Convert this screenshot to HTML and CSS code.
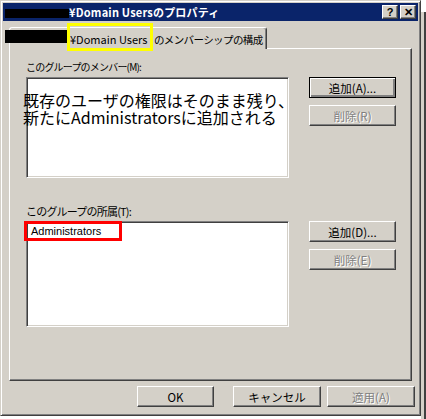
FILE: index.html
```html
<!DOCTYPE html>
<html lang="ja">
<head>
    <meta charset="UTF-8">
    <title>Domain Usersのプロパティ</title>
    <link rel="stylesheet" href="styles.css">
</head>
<body>
    <div class="screen">
        <div class="window">
            <div class="titlebar">
                <span class="title">¥Domain Usersのプロパティ</span>
                <div class="caption-buttons">
                    <span class="cap">?</span>
                    <span class="cap">✕</span>
                </div>
            </div>

            <div class="tabs">
                <div class="tab"><span class="tab-name">¥Domain Users</span> <span class="tab-rest">のメンバーシップの構成</span></div>
            </div>

            <div class="panel">
                <div class="label">このグループのメンバー(M):</div>
                <div class="row">
                    <div class="list list-members">
                        <div class="note">既存のユーザの権限はそのまま残り、<br>新たにAdministratorsに追加される</div>
                    </div>
                    <div class="side-buttons">
                        <span class="btn btn-default">追加(A)...</span>
                        <span class="btn disabled">削除(R)</span>
                    </div>
                </div>

                <div class="label label-second">このグループの所属(T):</div>
                <div class="row">
                    <div class="list list-groups">
                        <div class="item">Administrators</div>
                        <div class="mark-red"></div>
                    </div>
                    <div class="side-buttons">
                        <span class="btn">追加(D)...</span>
                        <span class="btn disabled">削除(E)</span>
                    </div>
                </div>
            </div>

            <div class="footer">
                <span class="btn btn-footer">OK</span>
                <span class="btn btn-footer">キャンセル</span>
                <span class="btn btn-footer disabled">適用(A)</span>
            </div>

            <!-- hidden names / highlight -->
            <div class="redact redact-title"></div>
            <div class="redact redact-tab"></div>
            <div class="mark-yellow"></div>
        </div>
        <div class="behind"></div>
    </div>
</body>
</html>
```

FILE: styles.css
```css
body {
    margin: 0;
    background-color: #ffffff;
    font-family: "Noto Sans CJK JP", "Liberation Sans", sans-serif;
    font-size: 11px;
    color: #000;
}

.screen {
    display: flex;
    width: 426px;
    height: 419px;
    overflow: hidden;
}

.window {
    position: relative;
    box-sizing: border-box;
    width: 421px;
    height: 416px;
    padding: 1px;
    background-color: #d4d0c8;
    border: 1px solid;
    border-color: #d4d0c8 #404040 #404040 #d4d0c8;
    box-shadow: inset 1px 1px #ffffff, inset -1px -1px #808080;
    display: flex;
    flex-direction: column;
}

.behind {
    flex: 1;
    background-color: #d4d0c8;
    border-right: 2px solid #404040;
    margin-top: 12px;
}

/* title bar */
.titlebar {
    height: 18px;
    margin: 1px 1px 0 1px;
    background-color: #0a246a;
    color: #fff;
    display: flex;
    align-items: center;
    padding-left: 66px;
    padding-right: 2px;
}

.title {
    font-weight: bold;
    font-size: 11px;
    flex: 1;
    white-space: nowrap;
    letter-spacing: 0.2px;
}

.caption-buttons {
    display: flex;
    gap: 2px;
}

.cap {
    box-sizing: border-box;
    width: 16px;
    height: 14px;
    background-color: #d4d0c8;
    color: #000;
    font-family: "Liberation Sans", sans-serif;
    font-weight: bold;
    font-size: 11px;
    line-height: 12px;
    text-align: center;
    border: 1px solid;
    border-color: #fff #404040 #404040 #fff;
    box-shadow: inset -1px -1px #808080;
}

/* tabs */
.tabs {
    display: flex;
    padding-left: 7px;
    margin-top: 6px;
    height: 21px;
}

.tab {
    box-sizing: border-box;
    width: 258px;
    height: 22px;
    padding-left: 60px;
    padding-top: 3px;
    border: 1px solid;
    border-bottom: none;
    border-color: #fff #404040 transparent #fff;
    border-radius: 3px 3px 0 0;
    box-shadow: inset -1px 0 #808080;
    white-space: nowrap;
    font-size: 11px;
    background-color: #d4d0c8;
    position: relative;
    z-index: 1;
}

.tab-name {
    margin-right: 4px;
}

.tab-rest {
    font-size: 10.5px;
    letter-spacing: -0.6px;
}

/* tab page */
.panel {
    box-sizing: border-box;
    width: 403px;
    height: 333px;
    margin-left: 7px;
    padding: 11px 0 0 16px;
    border: 1px solid;
    border-color: #fff #404040 #404040 #fff;
    box-shadow: inset -1px -1px #808080;
}

.label {
    font-size: 10px;
    height: 17px;
    line-height: 14px;
    letter-spacing: -0.8px;
}

.label-second {
    margin-top: 26px;
    font-size: 11px;
}

.row {
    display: flex;
    gap: 20px;
}

.list {
    position: relative;
    box-sizing: border-box;
    width: 263px;
    background-color: #fff;
    border: 1px solid;
    border-color: #808080 #fff #fff #808080;
    box-shadow: inset 1px 1px #404040, inset -1px -1px #d4d0c8;
}

.list-members {
    height: 101px;
}

.list-groups {
    height: 106px;
}

.note {
    position: absolute;
    left: -4px;
    top: 14px;
    font-size: 16px;
    line-height: 17px;
    white-space: nowrap;
}

.item {
    padding: 3px 0 0 4px;
    font-family: "Liberation Sans", sans-serif;
    font-size: 11px;
}

.mark-red {
    position: absolute;
    left: -3px;
    top: -1px;
    width: 92px;
    height: 14px;
    border: 3px solid #ff0000;
}

.side-buttons {
    display: flex;
    flex-direction: column;
    gap: 7px;
}

.btn {
    box-sizing: border-box;
    display: flex;
    align-items: center;
    justify-content: center;
    width: 87px;
    height: 21px;
    background-color: #d4d0c8;
    border: 1px solid;
    border-color: #fff #404040 #404040 #fff;
    box-shadow: inset -1px -1px #808080;
    font-size: 11.5px;
}

.btn-default {
    border-color: #000;
    box-shadow: inset 1px 1px #fff, inset -2px -2px #808080;
}

.btn.disabled {
    color: #808080;
    text-shadow: 1px 1px #fff;
}

.footer {
    display: flex;
    justify-content: flex-end;
    gap: 6px;
    padding: 5px 4px 0 0;
}

.btn-footer {
    width: 88px;
}

.btn-footer:first-child {
    width: 77px;
    margin-right: 13px;
}

/* overlays on the shot */
.redact,
.mark-yellow {
    position: absolute;
    z-index: 2;
}

.redact {
    background-color: #000;
}

.redact-title {
    left: 4px;
    top: 8px;
    width: 64px;
    height: 9px;
}

.redact-tab {
    left: 4px;
    top: 29px;
    width: 63px;
    height: 13px;
}

.mark-yellow {
    left: 66px;
    top: 22px;
    width: 80px;
    height: 22px;
    border: 3px solid #ffff00;
}
```
